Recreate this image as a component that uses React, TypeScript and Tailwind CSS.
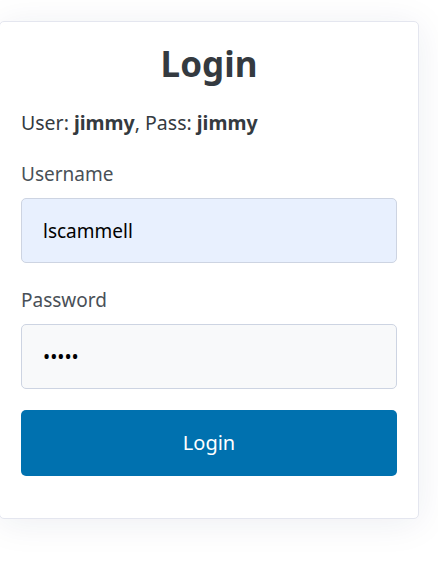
import { useState } from 'react';

export default function App() {
  const [username, setUsername] = useState('lscammell');
  const [password, setPassword] = useState('jimmy');

  return (
    <div
      className="min-h-screen bg-white pt-[21px]"
      style={{ fontFamily: '"Noto Sans", "Open Sans", sans-serif' }}
    >
      {/* card */}
      <div className="w-[420px] -ml-px bg-white border border-[#e4e6ef] rounded-[5px] shadow-[0_4px_36px_rgba(30,40,90,0.08)] px-[21px] pt-[20px] pb-[42px]">
        <h1 className="text-center text-[35px] leading-[43px] font-bold text-[#343a40]">Login</h1>

        <p className="mt-[24px] text-[19.5px] leading-[27px] text-[#343a40]">
          User: <b>jimmy</b>, Pass: <b>jimmy</b>
        </p>

        <form className="mt-[25px]" onSubmit={(e) => e.preventDefault()}>
          <label className="block text-[19px] leading-[27px] text-[#495057] mb-[10px]">Username</label>
          <input
            value={username}
            onChange={(e) => setUsername(e.target.value)}
            className="block w-full h-[65px] px-[21px] text-[19px] text-black bg-[#e8f0fe] border border-[#cdd4e2] rounded-[5px] outline-none"
          />

          <label className="block mt-[24px] text-[19px] leading-[27px] text-[#495057] mb-[10px]">Password</label>
          <input
            type="password"
            value={password}
            onChange={(e) => setPassword(e.target.value)}
            className="block w-full h-[65px] px-[21px] text-[19px] text-black bg-[#f8f9fa] border border-[#cdd4e2] rounded-[5px] outline-none"
          />

          <button
            type="submit"
            className="mt-[21px] w-full h-[66px] bg-[#0071af] text-white text-[20px] rounded-[5px]"
          >
            Login
          </button>
        </form>
      </div>
    </div>
  );
}
